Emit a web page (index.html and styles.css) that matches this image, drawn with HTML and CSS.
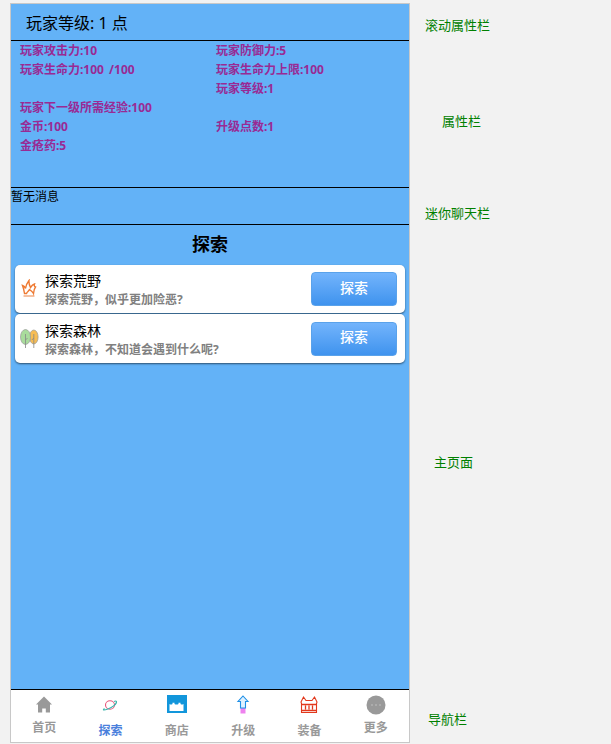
FILE: index.html
```html
<!DOCTYPE html>
<html lang="zh">

<head>
    <meta charset="utf-8">
    <meta name="viewport" content="width=device-width, initial-scale=1.0">
    <title>探索</title>
    <link rel="stylesheet" href="styles.css">
</head>

<body>

    <div class="phone">
        <header class="level_bar">玩家等级: 1 点</header>

        <section class="stats">
            <div>玩家攻击力:10</div>
            <div>玩家防御力:5</div>
            <div>玩家生命力:100 /100</div>
            <div>玩家生命力上限:100</div>
            <div></div>
            <div>玩家等级:1</div>
            <div>玩家下一级所需经验:100</div>
            <div></div>
            <div>金币:100</div>
            <div>升级点数:1</div>
            <div>金疮药:5</div>
        </section>

        <section class="chat">暂无消息</section>

        <main class="content">
            <h1>探索</h1>

            <article class="card">
                <svg class="card_icon" viewBox="0 0 20 20" width="20" height="20">
                    <path d="M3.500 17h11" fill="none" stroke="#f0a070" stroke-width="1.300"/>
                    <path d="M4.500 14.500C4 11.500 3.500 9 2.500 6.500C4 7 5 8 5.500 9.500C6 6.500 7 4 9 1.500C8.700 4.500 9.500 6.500 10.500 8.500C11.500 7 12.800 5.500 14.500 5C14 6.500 14.200 7.500 15.500 8C14.300 9.500 13.800 12 13.500 14.500C12.500 12.500 11 11.500 9.500 10.500C9 12 7 12.500 6.500 14.500Z" fill="none" stroke="#ee7a33" stroke-width="1.400"/>
                </svg>
                <div class="card_text">
                    <h2>探索荒野</h2>
                    <p>探索荒野，似乎更加险恶?</p>
                </div>
                <button class="go">探索</button>
            </article>

            <article class="card">
                <svg class="card_icon" viewBox="0 0 20 20" width="20" height="20">
                    <ellipse cx="13.800" cy="8" rx="4.300" ry="7" fill="#f7bd55" stroke="#999" stroke-width=".7"/>
                    <ellipse cx="5.500" cy="8" rx="5" ry="7.500" fill="#a9dc9c" stroke="#999" stroke-width=".7"/>
                    <path d="M5.500 5v14M5.500 11l2-2M13.800 5v14M13.800 9l-2 2" fill="none" stroke="#888" stroke-width=".8"/>
                </svg>
                <div class="card_text">
                    <h2>探索森林</h2>
                    <p>探索森林，不知道会遇到什么呢?</p>
                </div>
                <button class="go">探索</button>
            </article>
        </main>

        <nav class="tabs">
            <a class="raised">
                <svg viewBox="0 0 20 20" width="20" height="20">
                    <path d="M10 1.500L18 9.500h-2v8h-4.200v-4H8.200v4H4v-8H2z" fill="#999"/>
                </svg>
                <span>首页</span>
            </a>
            <a class="valgt">
                <svg viewBox="0 0 20 20" width="20" height="20">
                    <ellipse cx="10" cy="10" rx="4.500" ry="4.200" fill="none" stroke="#e8557a" stroke-width="1.100"/>
                    <path d="M4.500 13.500C2 15.500 4 15.500 8 14C12 12.500 17 9 16.500 6.500C16.200 6 15 6 14 6.500" fill="none" stroke="#3cb5ac" stroke-width="1.100"/>
                </svg>
                <span>探索</span>
            </a>
            <a>
                <svg viewBox="0 0 20 20" width="20" height="20">
                    <path d="M0 0h20v18H0z" fill="#1296db"/>
                    <path d="M2.500 9c1 .800 2 .800 3 0V7.800h2V9c1 .800 3 .800 4 0V7.800h2V9c1 .800 2 .800 3 0v7h-14z" fill="#fff"/>
                </svg>
                <span>商店</span>
            </a>
            <a>
                <svg viewBox="0 0 20 20" width="20" height="20">
                    <path d="M7.500 13h5v5.500h-5z" fill="#ee82ee"/>
                    <path d="M10 1L15 6.500h-2.500V13h-5V6.500H5z" fill="#dff1ff" stroke="#1e8fe6" stroke-width="1.100"/>
                </svg>
                <span>升级</span>
            </a>
            <a>
                <svg viewBox="0 0 20 20" width="20" height="20">
                    <path d="M4.500 2L7 5.500h6L15.500 2 18 7l-.5 1.500V17.500h-15V8.500L2 7z" fill="#fff" stroke="#e2381c" stroke-width="1.100"/>
                    <path d="M3 9.500h14M3 15.500h14M6.500 10.500v4M10 10.500v4M13.500 10.500v4" fill="none" stroke="#e2381c" stroke-width="1.300"/>
                </svg>
                <span>装备</span>
            </a>
            <a class="raised">
                <svg viewBox="0 0 20 20" width="20" height="20">
                    <circle cx="10" cy="10" r="9.500" fill="#999"/>
                    <circle cx="6" cy="10" r=".8" fill="#c4c4c4"/>
                    <circle cx="10" cy="10" r=".8" fill="#c4c4c4"/>
                    <circle cx="14" cy="10" r=".8" fill="#c4c4c4"/>
                </svg>
                <span>更多</span>
            </a>
        </nav>
    </div>

    <aside class="notes">
        <p class="note_scroll">滚动属性栏</p>
        <p class="note_attr">属性栏</p>
        <p class="note_chat">迷你聊天栏</p>
        <p class="note_main">主页面</p>
        <p class="note_nav">导航栏</p>
    </aside>

</body>

</html>
```

FILE: styles.css
```css
* {
    margin: 0;
    padding: 0;
    box-sizing: border-box;
}

body {
    display: flex;
    height: 744px;
    padding: 3px 0 0 10px;
    overflow: hidden;
    background-color: #f2f2f2;
    font-family: "Noto Sans", "Noto Sans CJK SC", sans-serif;
}

.phone {
    display: flex;
    flex-direction: column;
    width: 400px;
    height: 740px;
    border: solid 1px #c8c8c8;
    background-color: #63b2f7;
}

.level_bar {
    height: 37px;
    padding: 8px 0 0 15px;
    border-bottom: solid 1px #000;
    font-size: 16px;
    line-height: 22px;
    color: #000;
}

.stats {
    display: grid;
    grid-template-columns: 196px 1fr;
    grid-auto-rows: 19px;
    height: 146px;
    padding: 0 0 0 9px;
    font-size: 12px;
    font-weight: 700;
    line-height: 19px;
    word-spacing: 2px;
    color: #992a94;
}

.chat {
    height: 38px;
    border-top: solid 1px #000;
    border-bottom: solid 1px #000;
    font-size: 12px;
    line-height: 18px;
    color: #000;
}

.content {
    flex: 1;
    padding: 0 4px;
}

h1 {
    height: 40px;
    font-size: 18px;
    line-height: 39px;
    text-align: center;
    color: #000;
}

.card {
    display: flex;
    align-items: center;
    height: 48px;
    margin-bottom: 1px;
    padding: 0 8px 0 5px;
    background-color: #fff;
    border-radius: 5px;
    box-shadow: 0 1px 2px rgba(0, 0, 0, .55);
}

.card + .card {
    height: 49px;
}

.card_icon {
    flex: none;
}

.card_text {
    flex: 1;
    margin-left: 5px;
    padding-top: 3px;
}

h2 {
    font-size: 14px;
    font-weight: 400;
    line-height: 18px;
    color: #000;
}

.card_text p {
    margin-top: 1px;
    font-size: 12px;
    font-weight: 700;
    line-height: 18px;
    color: #808080;
}

.go {
    width: 86px;
    height: 34px;
    padding-bottom: 3px;
    border: solid 1px #5aa2ea;
    border-radius: 4px;
    background: linear-gradient(#73b4fc, #3f93ee);
    font-family: inherit;
    font-size: 14px;
    font-weight: 500;
    line-height: 28px;
    color: #fff;
}

.tabs {
    display: grid;
    grid-template-columns: repeat(6, 1fr);
    height: 53px;
    border-top: solid 1px #000;
    background-color: #fff;
}

.tabs a {
    display: flex;
    flex-direction: column;
    align-items: center;
    padding-top: 5px;
    font-size: 12px;
    font-weight: 700;
    color: #999;
}

.tabs span {
    margin-top: 7px;
    line-height: 17px;
}

.tabs .valgt {
    color: #4a80dc;
}

.tabs .raised span {
    margin-top: 4px;
}

.notes {
    flex: 1;
    font-size: 13px;
    font-weight: 400;
    line-height: 18px;
    color: #008000;
}

.note_scroll {
    margin: 13px 0 0 15px;
}

.note_attr {
    margin: 78px 0 0 32px;
}

.note_chat {
    margin: 74px 0 0 15px;
}

.note_main {
    margin: 231px 0 0 24px;
}

.note_nav {
    margin: 239px 0 0 18px;
}
```
